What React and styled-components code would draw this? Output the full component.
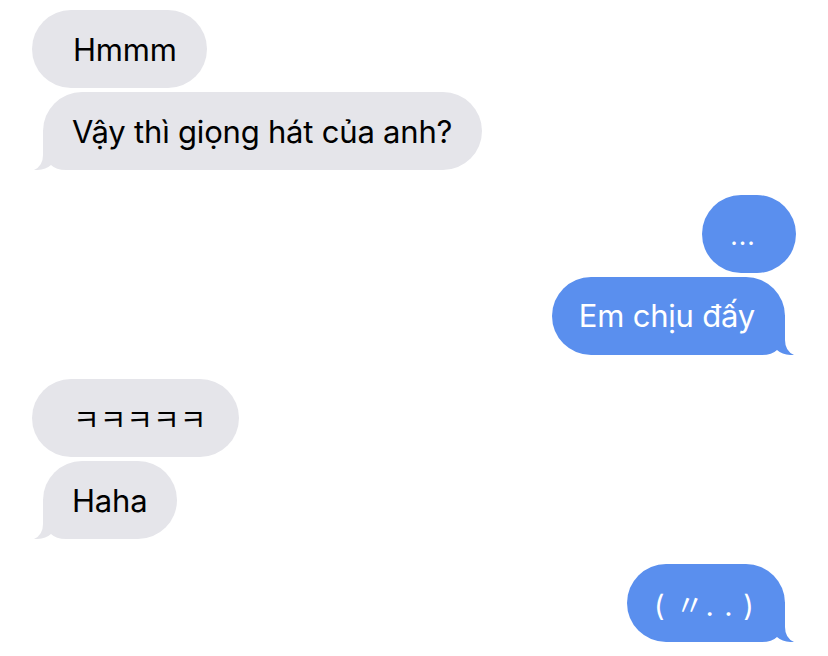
import React from "react";
import styled, { createGlobalStyle, css } from "styled-components";

const Global = createGlobalStyle`
  html, body { margin: 0; padding: 0; background: #ffffff; }
  body { font-family: Inter, "Noto Sans", "Noto Sans CJK KR", sans-serif; }
`;

const GRAY = "#e5e5ea";
const BLUE = "#5a8fee";

const Thread = styled.div`
  width: 828px;
  height: 656px;
  box-sizing: border-box;
  padding: 10px 32px 0 32px;
  display: flex;
  flex-direction: column;
  overflow: hidden;
`;

const Group = styled.div`
  display: flex;
  flex-direction: column;
  align-items: ${(p) => (p.$me ? "flex-end" : "flex-start")};
  gap: 4px;
  margin-bottom: 24.5px;
`;

const Bubble = styled.div`
  position: relative;
  box-sizing: border-box;
  height: 78px;
  display: flex;
  align-items: center;
  border-radius: 39px;
  font-size: 31px;
  letter-spacing: -0.2px;
  white-space: nowrap;
  background: ${(p) => (p.$me ? BLUE : GRAY)};
  color: ${(p) => (p.$me ? "#ffffff" : "#000000")};
  ${(p) =>
    p.$me
      ? css`
          padding: 0 ${p.$tail ? 30 : 40}px 0 ${p.$tail ? 27 : 28}px;
          margin-right: ${p.$tail ? 11 : 0}px;
        `
      : css`
          padding: 0 ${p.$wide ? 33 : 30}px 0 ${p.$tail ? 29 : 41}px;
          margin-left: ${p.$tail ? 11 : 0}px;
        `}
`;

const TailSvg = styled.svg`
  position: absolute;
  bottom: 0;
  width: 56px;
  height: 40px;
  ${(p) =>
    p.$me
      ? css`
          right: -12px;
          transform: scaleX(-1);
        `
      : css`
          left: -12px;
        `}
`;

const Content = styled.span`
  position: relative;
`;

const Kk = styled.span`
  font-family: "Noto Sans CJK KR", sans-serif;
  font-size: 29px;
  letter-spacing: 0;
`;

const Kaomoji = styled.span`
  font-size: 29px;
  letter-spacing: 1.2px;
`;

const Dots = styled.span`
  font-size: 22px;
  letter-spacing: 1.5px;
  font-weight: 600;
  padding-bottom: 4px;
`;

function Tail({ me }) {
  return (
    <TailSvg $me={me} viewBox="0 0 56 40" aria-hidden="true">
      <path
        d="M12 0 L12 25 Q12 36 3 40 Q14 40.5 20 35 Q25 40 35 40 L56 40 L56 0 Z"
        fill={me ? BLUE : GRAY}
      />
    </TailSvg>
  );
}

function Msg({ me, tail, wide, children }) {
  return (
    <Bubble $me={me} $tail={tail} $wide={wide}>
      {tail && <Tail me={me} />}
      <Content>{children}</Content>
    </Bubble>
  );
}

export default function App() {
  return (
    <>
      <Global />
      <Thread>
        <Group>
          <Msg>Hmmm</Msg>
          <Msg tail>Vậy thì giọng hát của anh?</Msg>
        </Group>
        <Group $me>
          <Msg me>
            <Dots>...</Dots>
          </Msg>
          <Msg me tail>
            Em chịu đấy
          </Msg>
        </Group>
        <Group>
          <Msg wide>
            <Kk>ㅋㅋㅋㅋㅋ</Kk>
          </Msg>
          <Msg tail>Haha</Msg>
        </Group>
        <Group $me>
          <Msg me tail>
            <Kaomoji>( 〃.  . )</Kaomoji>
          </Msg>
        </Group>
      </Thread>
    </>
  );
}
